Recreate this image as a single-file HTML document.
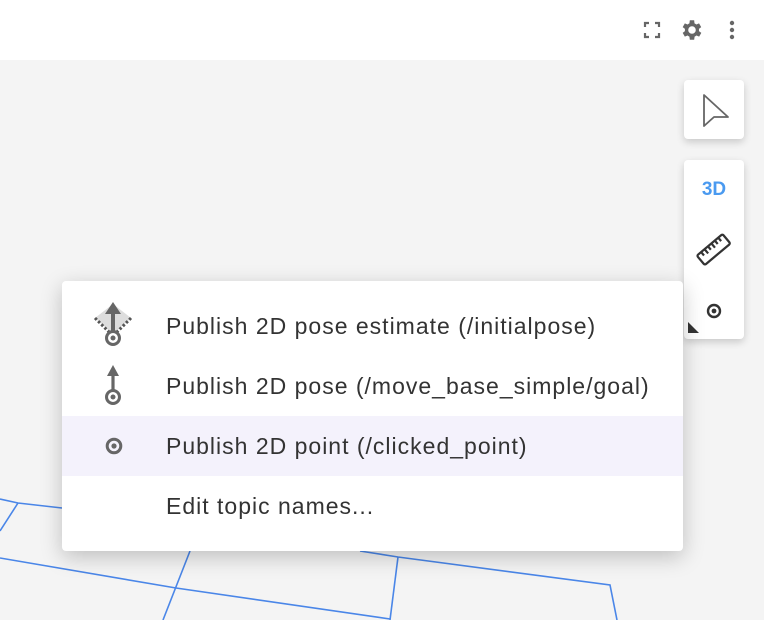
<!DOCTYPE html>
<html><head><meta charset="utf-8"><style>
*{margin:0;padding:0;box-sizing:border-box}
body{width:764px;height:620px;overflow:hidden;background:#f4f4f4;font-family:"Liberation Sans",sans-serif;position:relative}
.top{position:absolute;left:0;top:0;width:764px;height:60px;background:#fff}
.panel{position:absolute;background:#fff;border-radius:4px;box-shadow:0 3px 8px rgba(0,0,0,.18)}
.menu{position:absolute;left:62px;top:281px;width:621px;height:270px;background:#fff;border-radius:4px;box-shadow:0 6px 22px rgba(0,0,0,.22)}
.row{position:absolute;left:0;width:621px;height:60px;font-size:23px;letter-spacing:1px;color:#333;line-height:60px;padding-left:104px}
.row svg{position:absolute;left:31px;top:2px}
</style></head><body>
<svg style="position:absolute;left:0;top:0" width="764" height="620">
<g stroke="#4a86e8" stroke-width="1.6" fill="none">
<polyline points="0,499 18,503 62,508"/>
<line x1="18" y1="503" x2="0" y2="531"/>
<polyline points="0,558 176,588 390,619"/>
<line x1="190" y1="551" x2="163" y2="620"/>
<polyline points="360,551 398,557 610,585 617,620"/>
<line x1="398" y1="557" x2="390" y2="620"/>
</g></svg>
<div class="top"></div>
<svg style="position:absolute;left:642px;top:20px" width="20" height="20" viewBox="0 0 20 20" fill="none" stroke="#666" stroke-width="2.2"><path d="M3 7V3h4M13 3h4v4M17 13v4h-4M7 17H3v-4"/></svg>
<svg style="position:absolute;left:679px;top:17px" width="26" height="26" viewBox="0 0 24 24"><path fill="#666" d="M19.4 13a7.5 7.5 0 000-2l2.1-1.6-2-3.5-2.5 1a7.6 7.6 0 00-1.7-1L15 3h-4l-.4 2.9a7.6 7.6 0 00-1.7 1l-2.5-1-2 3.5L6.5 11a7.5 7.5 0 000 2l-2.1 1.6 2 3.5 2.5-1c.5.4 1.1.8 1.7 1L11 21h4l.4-2.9c.6-.2 1.2-.6 1.7-1l2.5 1 2-3.5zM13 15.5a3.5 3.5 0 110-7 3.5 3.5 0 010 7z" transform="translate(-1 0)"/></svg>
<svg style="position:absolute;left:726px;top:20px" width="12" height="20" viewBox="0 0 12 20" fill="#666"><circle cx="6" cy="3" r="2.2"/><circle cx="6" cy="10" r="2.2"/><circle cx="6" cy="17" r="2.2"/></svg>
<div class="panel" style="left:684px;top:80px;width:60px;height:59px">
<svg style="position:absolute;left:16px;top:12px" width="32" height="36" viewBox="0 0 32 36"><path d="M4 3L28 25 14 25 4 34Z" fill="none" stroke="#666" stroke-width="1.8" stroke-linejoin="round"/></svg>
</div>
<div class="panel" style="left:684px;top:160px;width:60px;height:179px">
<div style="position:absolute;left:0;top:19px;width:60px;text-align:center;font-weight:bold;font-size:19px;color:#4a9af0">3D</div>
<svg style="position:absolute;left:11px;top:71px" width="38" height="38" viewBox="0 0 34 34"><g transform="rotate(-40 17 17)" fill="none" stroke="#333" stroke-width="2"><rect x="2" y="11" width="30" height="11" rx="1.5"/><path d="M7 11v4M11 11v5M15 11v4M19 11v5M23 11v4M27 11v4"/></g></svg>
<svg style="position:absolute;left:20px;top:141px" width="20" height="20" viewBox="0 0 20 20"><circle cx="10" cy="10" r="6" fill="none" stroke="#333" stroke-width="2.4"/><circle cx="10" cy="10" r="2.4" fill="#333"/></svg>
<svg style="position:absolute;left:4px;top:162px" width="12" height="12"><path d="M0 0L11 11H0Z" fill="#333"/></svg>
</div>
<div class="menu">
<div class="row" style="top:15px">
<svg width="44" height="50" viewBox="0 0 44 50"><path d="M2 20L20 6 38 20 20 36Z" fill="#ddd"/><path d="M2 20L17 35M38 20L23 35" stroke="#555" stroke-width="3" stroke-dasharray="2.5 2" fill="none"/><path d="M20 10v24" stroke="#666" stroke-width="4"/><path d="M12 16L20 4 28 16Z" fill="#666"/><circle cx="20" cy="40" r="6.5" fill="#fff" stroke="#666" stroke-width="3"/><circle cx="20" cy="40" r="2.5" fill="#666"/></svg>
Publish 2D pose estimate (/initialpose)</div>
<div class="row" style="top:75px">
<svg width="44" height="50" viewBox="0 0 44 50"><path d="M20 14v18" stroke="#666" stroke-width="3.2"/><path d="M14 18L20 7 26 18Z" fill="#666"/><circle cx="20" cy="39" r="6.5" fill="none" stroke="#666" stroke-width="3"/><circle cx="20" cy="39" r="2.5" fill="#666"/></svg>
Publish 2D pose (/move_base_simple/goal)</div>
<div class="row" style="top:135px;background:#f4f2fc">
<svg width="44" height="50" viewBox="0 0 44 50"><circle cx="21" cy="28" r="6.8" fill="none" stroke="#666" stroke-width="3"/><circle cx="21" cy="28" r="2.6" fill="#666"/></svg>
Publish 2D point (/clicked_point)</div>
<div class="row" style="top:195px">Edit topic names...</div>
</div>
</body></html>
